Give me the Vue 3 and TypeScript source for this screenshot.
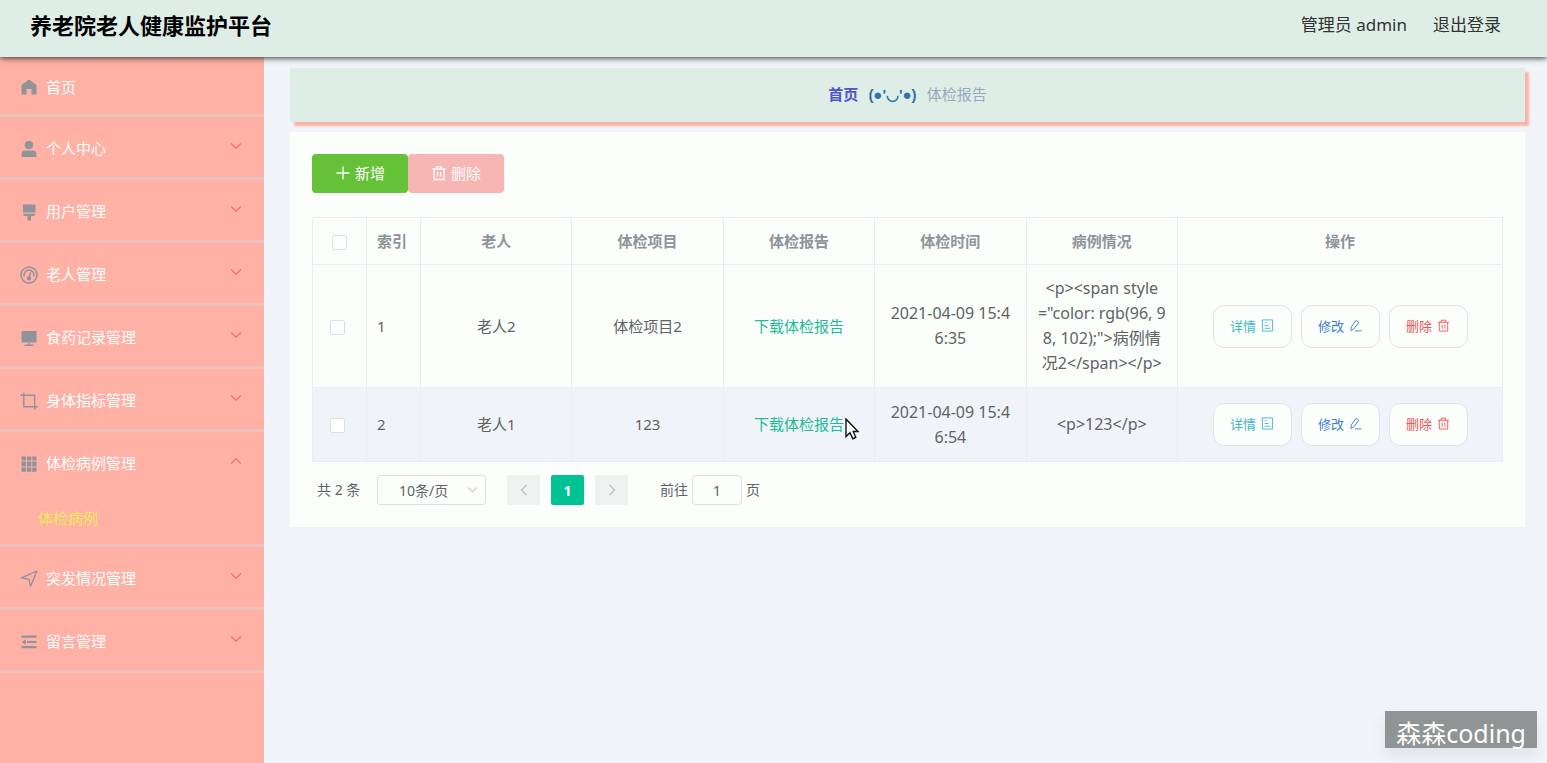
<script setup lang="ts">
import { ref } from 'vue'

interface MenuItem {
  label: string
  icon: string
  leaf?: boolean
  children?: string[]
}

interface Row {
  id: number
  elder: string
  project: string
  time: string
  detail: string
  hover?: boolean
}

const menu: MenuItem[] = [
  { label: '首页', icon: 'home', leaf: true },
  { label: '个人中心', icon: 'user' },
  { label: '用户管理', icon: 'brush' },
  { label: '老人管理', icon: 'gauge' },
  { label: '食药记录管理', icon: 'monitor' },
  { label: '身体指标管理', icon: 'crop' },
  { label: '体检病例管理', icon: 'grid', children: ['体检病例'] },
  { label: '突发情况管理', icon: 'send' },
  { label: '留言管理', icon: 'fold' },
]

const columns = ['老人', '体检项目', '体检报告', '体检时间', '病例情况', '操作']

const rows: Row[] = [
  {
    id: 1,
    elder: '老人2',
    project: '体检项目2',
    time: '2021-04-09 15:4\n6:35',
    detail: '<p><span style\n="color: rgb(96, 9\n8, 102);">病例情\n况2</span></p>',
  },
  {
    id: 2,
    elder: '老人1',
    project: '123',
    time: '2021-04-09 15:4\n6:54',
    detail: '<p>123</p>',
    hover: true,
  },
]

const pageSize = ref('10')
const jump = ref('1')
</script>

<template>
  <div class="app">
    <header class="topbar">
      <h1>养老院老人健康监护平台</h1>
      <div class="account">
        <span>管理员 admin</span>
        <a href="#">退出登录</a>
      </div>
    </header>

    <div class="body">
      <nav class="sidebar">
        <ul>
          <li v-for="item in menu" :key="item.label" :class="{ leaf: item.leaf }">
            <a href="#" class="entry">
              <svg class="ico" viewBox="0 0 18 18" aria-hidden="true">
                <path v-if="item.icon === 'home'" fill="currentColor" d="M9 1.5 16.5 7v9.5H11.500V11h-5v5.500H1.500V7z" />
                <g v-else-if="item.icon === 'user'" fill="currentColor">
                  <circle cx="9" cy="5" r="4.300" />
                  <path d="M1.500 17v-2.500q0-4 4-4h7q4 0 4 4V17z" />
                </g>
                <path v-else-if="item.icon === 'brush'" fill="currentColor" d="M3 1.500h12.500v8H3zM3 10.800h12.500q0 2.200-2.200 2.200H11v4.500H7.500V13H5.200Q3 13 3 10.800z" />
                <g v-else-if="item.icon === 'gauge'" fill="none" stroke="currentColor" stroke-width="1.500">
                  <circle cx="9" cy="9" r="8" />
                  <path d="M4.200 10.500A5 5 0 1 1 13.800 10.500M9 12 10.500 6.500" />
                  <circle cx="9" cy="12.400" r="1.300" fill="currentColor" />
                </g>
                <path v-else-if="item.icon === 'monitor'" fill="currentColor" d="M1.500 2h15v11.500h-15zM8 14.300h2v1.200h3.500V17h-9v-1.500H8z" />
                <path v-else-if="item.icon === 'crop'" fill="none" stroke="currentColor" stroke-width="1.400" d="M0.500 3.200h14.200v14.300M3.800 0.500v14.200h14" />
                <path v-else-if="item.icon === 'grid'" fill="currentColor" d="M1.500 1.500h4.400v4H1.500zM6.900 1.500h4.400v4H6.900zM12.300 1.500h4.200v4h-4.200zM1.500 6.500h4.400v5H1.500zM6.900 6.500h4.400v5H6.900zM12.300 6.500h4.200v5h-4.200zM1.500 12.500h4.400v4.300H1.500zM6.900 12.500h4.400v4.300H6.900zM12.300 12.500h4.200v4.300h-4.200z" />
                <path v-else-if="item.icon === 'send'" fill="none" stroke="currentColor" stroke-width="1.300" stroke-linejoin="round" d="M1.500 7.800 16.800 1.200 10.600 16.300 9 9.300z" />
                <path v-else fill="currentColor" d="M1.500 2.500h15v2.300h-15zM7 8h9.500v2H7zM1.500 13h15v2.300h-15zM5.800 6.300v5.400L1.800 9z" />
              </svg>
              <span class="label">{{ item.label }}</span>
              <svg v-if="!item.leaf" class="caret" viewBox="0 0 12 8" aria-hidden="true">
                <path :d="item.children ? 'M1.200 6.500 6 1.800 10.800 6.500' : 'M1.200 1.500 6 6.200 10.800 1.500'" />
              </svg>
            </a>
            <a v-for="child in item.children" :key="child" href="#" class="sub">{{ child }}</a>
          </li>
        </ul>
      </nav>

      <main>
        <nav class="crumbs">
          <a href="#">首页</a>
          <span class="face">(●'◡'●)</span>
          <span class="here">体检报告</span>
        </nav>

        <section class="panel">
          <div class="tools">
            <button type="button" class="add">
              <svg viewBox="0 0 16 16" aria-hidden="true"><path d="M8 1.500v13M1.500 8h13" /></svg>
              新增
            </button>
            <button type="button" class="remove" disabled>
              <svg viewBox="0 0 16 16" aria-hidden="true"><path d="M1.500 4h13M5.500 4V1.800h5V4M3 4v10.500h10V4M6.500 7v4.500M9.500 7v4.500" /></svg>
              删除
            </button>
          </div>

          <table>
            <colgroup>
              <col class="narrow" />
              <col class="narrow" />
              <col v-for="n in 5" :key="n" />
              <col class="ops" />
            </colgroup>
            <thead>
              <tr>
                <th><input type="checkbox" aria-label="全选" /></th>
                <th class="left">索引</th>
                <th v-for="c in columns" :key="c">{{ c }}</th>
              </tr>
            </thead>
            <tbody>
              <tr v-for="row in rows" :key="row.id" :class="{ hover: row.hover }">
                <td class="left pick"><input type="checkbox" :aria-label="'选择 ' + row.id" /></td>
                <td class="left">{{ row.id }}</td>
                <td>{{ row.elder }}</td>
                <td>{{ row.project }}</td>
                <td>
                  <span class="report">
                    <a href="#">下载体检报告</a>
                    <svg v-if="row.hover" class="pointer" viewBox="0 0 14 22" aria-hidden="true">
                      <path d="M1 1v17.500l4-3.800 2.800 6 3-1.400-2.600-5.800H13z" />
                    </svg>
                  </span>
                </td>
                <td class="code">{{ row.time }}</td>
                <td class="code">{{ row.detail }}</td>
                <td>
                  <div class="actions">
                    <button type="button" class="view">
                      详情
                      <svg viewBox="0 0 14 14" aria-hidden="true"><path d="M1.500 1h11v12h-11zM4 4h2M4 7h4M4 10h6" /></svg>
                    </button>
                    <button type="button" class="edit">
                      修改
                      <svg viewBox="0 0 14 14" aria-hidden="true"><path d="M2.500 8.500 7.500 1.500 10.500 3.500 5.500 10.500 2 12.500zM6.500 12.800h7" /></svg>
                    </button>
                    <button type="button" class="del">
                      删除
                      <svg viewBox="0 0 14 14" aria-hidden="true"><path d="M1 3.500h12M4.500 3.500V1.300h5v2.200M2.500 3.500v9.500h9V3.500M5.500 6v4.500M8.500 6v4.500" /></svg>
                    </button>
                  </div>
                </td>
              </tr>
            </tbody>
          </table>

          <div class="pager">
            <span class="total">共 2 条</span>
            <span class="size">
              <select v-model="pageSize" aria-label="每页条数">
                <option value="10">10条/页</option>
                <option value="20">20条/页</option>
              </select>
              <svg viewBox="0 0 12 8" aria-hidden="true"><path d="M1.500 1.500 6 6 10.500 1.500" /></svg>
            </span>
            <div class="pages">
              <button type="button" disabled aria-label="上一页">
                <svg viewBox="0 0 8 12" aria-hidden="true"><path d="M6.500 1 1.500 6l5 5" /></svg>
              </button>
              <button type="button" class="current">1</button>
              <button type="button" disabled aria-label="下一页">
                <svg viewBox="0 0 8 12" aria-hidden="true"><path d="M1.500 1l5 5-5 5" /></svg>
              </button>
            </div>
            <label class="jump">前往<input v-model="jump" type="text" />页</label>
          </div>
        </section>
      </main>
    </div>

    <div class="badge">森森coding</div>
  </div>
</template>

<style>
body {
  margin: 0;
  background: #f1f5f9;
}
</style>

<style scoped>
.app {
  display: flex;
  flex-direction: column;
  position: relative;
  min-height: 100vh;
  font-family: 'Noto Sans', 'Noto Sans CJK SC', sans-serif;
  font-size: 15px;
  line-height: 25px;
  color: #606266;
}
.app * {
  box-sizing: border-box;
}
a {
  color: inherit;
  text-decoration: none;
}
button,
input,
select {
  font-family: inherit;
  margin: 0;
}
svg {
  flex: none;
}
.topbar {
  position: relative;
  z-index: 1;
  display: flex;
  align-items: center;
  justify-content: space-between;
  height: 57px;
  padding: 0 46px 8px 30px;
  background: #deeee6;
  box-shadow: 0 1px 6px #333;
}
h1 {
  margin: 0;
  font-size: 22px;
  line-height: 32px;
  font-weight: 700;
  color: #000;
}
.account {
  display: flex;
  gap: 26px;
  font-size: 17px;
  color: #333;
}
.body {
  display: flex;
  flex: 1;
}
.sidebar {
  width: 264px;
  flex: none;
  background: #ffb1a5;
}
ul {
  list-style: none;
  margin: 0;
  padding: 0;
}
li {
  border-bottom: 3px solid #ebc2bc;
}
.entry {
  display: flex;
  align-items: center;
  height: 60px;
  padding: 3px 22px 0 20px;
  color: #fff;
}
.leaf .entry {
  height: 57px;
}
.ico {
  width: 18px;
  height: 18px;
  margin-right: 8px;
  color: #909399;
}
.label {
  flex: 1;
}
.caret {
  width: 12px;
  height: 8px;
  margin-bottom: 6px;
  fill: none;
  stroke: #f56c6c;
  stroke-width: 1.200;
}
.sub {
  display: block;
  height: 52px;
  padding: 14px 38px 0;
  color: #eee95a;
}
main {
  flex: 1;
  min-width: 0;
  padding: 11px 22px 11px 26px;
}
.crumbs {
  display: flex;
  align-items: center;
  justify-content: center;
  gap: 10px;
  height: 54px;
  padding-bottom: 2px;
  background: #deeee6;
  box-shadow: 4px 4px 2px #fbb3a6;
  font-size: 15px;
}
.crumbs a {
  font-weight: 700;
  color: #5254c8;
}
.face {
  font-family: 'Liberation Sans', 'Noto Sans', sans-serif;
  font-weight: 700;
  color: #2e74ae;
}
.here {
  color: #97a8be;
}
.panel {
  margin-top: 10px;
  padding: 22px;
  background: #fbfefb;
}
.tools {
  display: flex;
  margin-bottom: 24px;
}
.tools button {
  display: flex;
  align-items: center;
  justify-content: center;
  gap: 4px;
  width: 96px;
  height: 39px;
  padding: 0 0 2px;
  border: 0;
  border-radius: 4px;
  font-size: 15px;
  color: #fff;
}
.tools svg {
  width: 16px;
  height: 16px;
  fill: none;
  stroke: currentColor;
  stroke-width: 1.300;
}
.tools .add {
  background: #65c138;
}
.tools .remove {
  background: #f7b5b3;
}
table {
  width: 100%;
  table-layout: fixed;
  border-collapse: collapse;
}
.narrow {
  width: 54px;
}
.ops {
  width: 325px;
}
th,
td {
  padding: 11px;
  border: 1px solid #e9edf5;
  text-align: center;
}
th {
  line-height: 24px;
  font-weight: 700;
  color: #909399;
}
.left {
  padding-left: 10px;
  padding-right: 0;
  text-align: left;
}
.pick {
  padding-left: 17px;
}
.hover {
  background: #f0f4f8;
}
.code {
  padding-left: 4px;
  padding-right: 4px;
  font-size: 16px;
  white-space: pre-line;
}
input[type='checkbox'] {
  appearance: none;
  display: inline-block;
  width: 15px;
  height: 15px;
  border: 1px solid #dcdfe6;
  border-radius: 2px;
  background: #fdfefd;
  vertical-align: middle;
}
.report {
  position: relative;
  color: #20bb99;
}
.pointer {
  position: absolute;
  left: 91px;
  top: 4px;
  width: 14px;
  height: 22px;
  fill: #fff;
  stroke: #111;
  stroke-width: 1.400;
}
.actions {
  display: flex;
  justify-content: center;
  gap: 9px;
  padding: 4px 0;
}
.actions button {
  display: flex;
  align-items: center;
  justify-content: center;
  gap: 5px;
  width: 79px;
  height: 43px;
  padding: 0 0 2px;
  border: 1px solid #e0e2ea;
  border-radius: 11px;
  background: #fbfefb;
  font-size: 13px;
}
.actions svg {
  width: 13px;
  height: 13px;
  fill: none;
  stroke: currentColor;
  stroke-width: 1;
}
.actions .view {
  color: #40b8cc;
}
.actions .edit {
  color: #3f7fd0;
}
.actions .del {
  color: #ee5656;
}
.pager {
  display: flex;
  align-items: center;
  margin-top: 13px;
  padding-left: 5px;
  font-size: 14px;
  line-height: 30px;
}
.total {
  width: 60px;
}
.size {
  position: relative;
  display: flex;
  width: 109px;
  height: 30px;
}
.size select {
  appearance: none;
  width: 100%;
  padding: 0 0 0 21px;
  border: 1px solid #dcdfe6;
  border-radius: 3px;
  background: #fbfefb;
  font-size: 14px;
  color: #606266;
}
.size svg {
  position: absolute;
  right: 8px;
  top: 11px;
  width: 11px;
  height: 8px;
  fill: none;
  stroke: #c0c4cc;
  stroke-width: 1.200;
}
.pages {
  display: flex;
  gap: 11px;
  margin: 0 32px 0 21px;
}
.pages button {
  width: 33px;
  height: 30px;
  padding: 0;
  border: 0;
  border-radius: 2px;
  background: #f0f2f2;
  font-size: 14px;
  color: #c0c4cc;
}
.pages svg {
  width: 8px;
  height: 12px;
  fill: none;
  stroke: currentColor;
  stroke-width: 1.600;
}
.pages .current {
  background: #00c292;
  font-weight: 700;
  color: #fff;
}
.jump {
  display: flex;
  align-items: center;
}
.jump input {
  width: 50px;
  height: 30px;
  margin: 0 4px;
  padding: 0;
  border: 1px solid #dcdfe6;
  border-radius: 4px;
  background: #fbfefb;
  font-size: 14px;
  text-align: center;
  color: #606266;
}
.badge {
  position: absolute;
  right: 10px;
  bottom: 15px;
  height: 37px;
  padding: 0 11px;
  background: #919494;
  box-shadow: 0 8px 16px rgba(120, 130, 140, 0.15);
  font-size: 25px;
  line-height: 44px;
  color: #fff;
}
</style>
